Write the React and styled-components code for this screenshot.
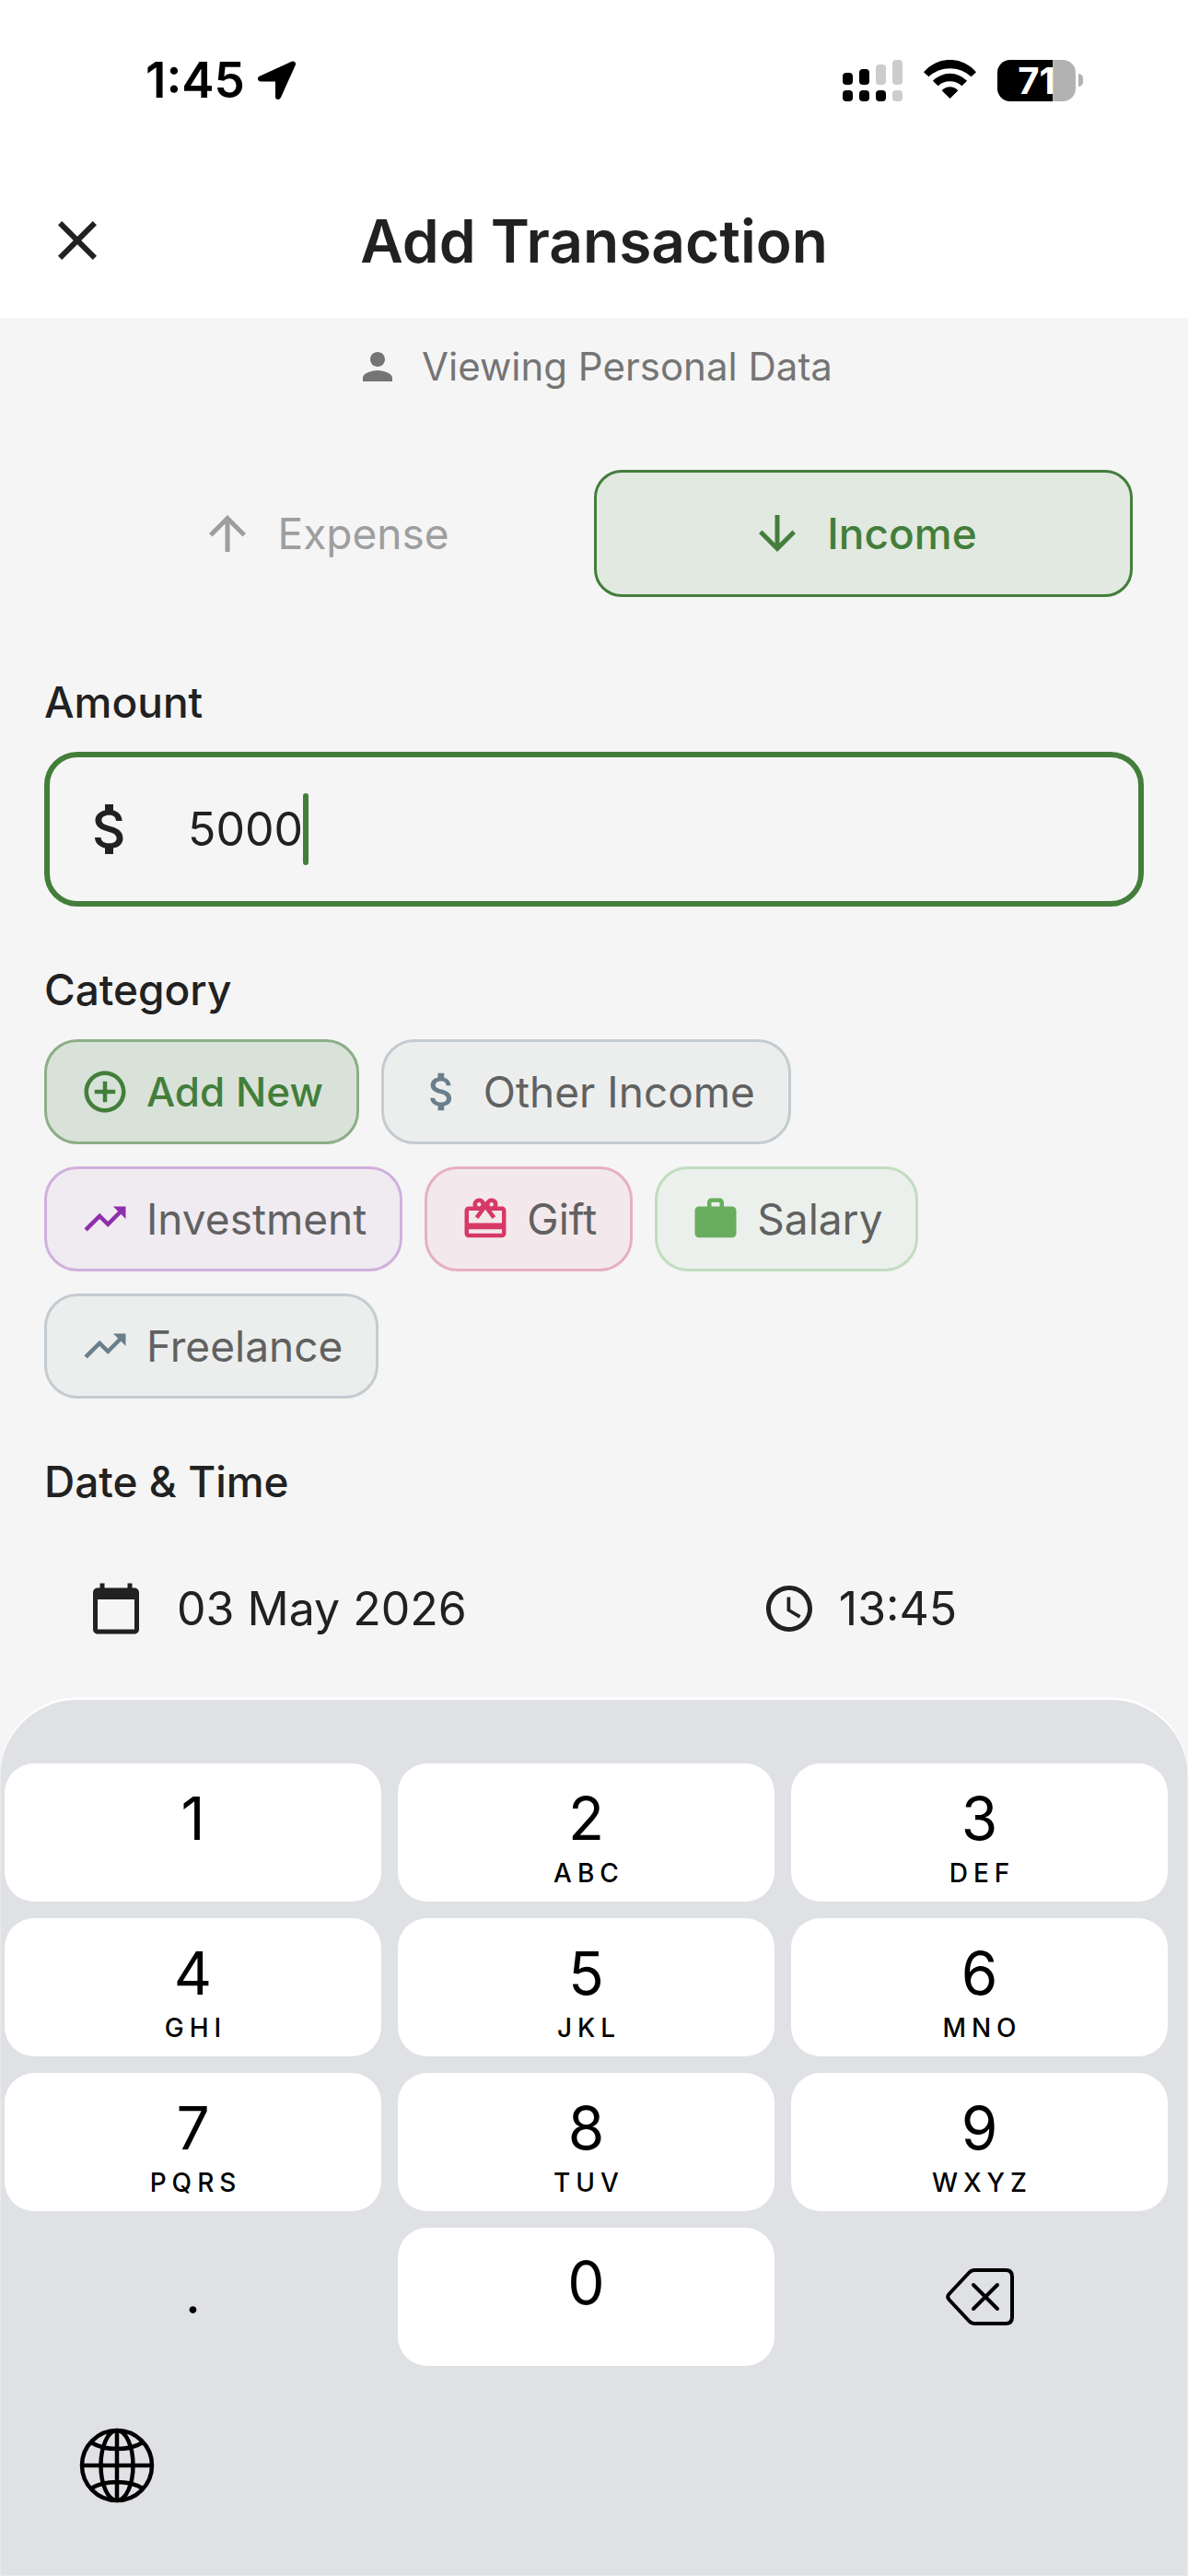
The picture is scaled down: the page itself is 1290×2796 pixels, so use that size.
import React, { useState } from "react"
import styled, { createGlobalStyle } from "styled-components"
import {
  MdAccessTime,
  MdAddCircleOutline,
  MdArrowDownward,
  MdArrowUpward,
  MdAttachMoney,
  MdCalendarToday,
  MdCardGiftcard,
  MdClose,
  MdPerson,
  MdTrendingUp,
  MdWork,
} from "react-icons/md"

const colors = {
  black: "#000000",
  white: "#ffffff",
  page: "#f5f5f5",
  text: "#212121",
  chipText: "#616161",
  muted: "#757575",
  disabled: "#9e9e9e",
  green: "#437e3a",
  greenTint: "#e1e9e1",
  keyboard: "#dfe1e5",
}

const fonts = {
  title: "64px",
  body: "50px",
  option: "46px",
  strong: "44px",
  small: "42px",
}

const GlobalStyle = createGlobalStyle`
  *, *::before, *::after {
    box-sizing: border-box;
  }

  body {
    margin: 0;
    background: ${colors.page};
    color: ${colors.text};
    font-family: Inter, "Liberation Sans", sans-serif;
  }

  button, input {
    margin: 0;
    padding: 0;
    border: 0;
    background: none;
    color: inherit;
    font: inherit;
  }

  svg {
    display: block;
    flex-shrink: 0;
  }
`

const Screen = styled.div`
  display: flex;
  flex-direction: column;
  min-height: 100vh;
`

const StatusBar = styled.div`
  display: flex;
  align-items: center;
  justify-content: space-between;
  height: 177px;
  padding: 0 114px 3px 158px;
  background: ${colors.white};
  color: ${colors.black};
`

const StatusGroup = styled.div`
  display: flex;
  align-items: center;
  gap: ${props => props.$gap};
`

const Clock = styled.span`
  font-size: 53px;
  font-weight: 600;
`

const Battery = styled.div`
  display: flex;
  align-items: center;
  gap: 3px;
`

const BatteryBody = styled.div`
  display: flex;
  align-items: center;
  justify-content: center;
  width: 85px;
  height: 45px;
  border-radius: 14px;
  background: linear-gradient(to right, ${colors.black} 71%, #b2b2b2 71%);
  color: ${colors.white};
  font-size: 40px;
  font-weight: 700;
  line-height: 45px;
`

const BatteryTip = styled.div`
  width: 5px;
  height: 14px;
  border-radius: 0 5px 5px 0;
  background: #b2b2b2;
`

const Header = styled.header`
  display: grid;
  grid-template-columns: 72px 1fr 72px;
  align-items: center;
  height: 168px;
  padding: 0 48px;
  background: ${colors.white};
`

const Title = styled.h1`
  margin: 0;
  font-size: ${fonts.title};
  font-weight: 600;
  text-align: center;
`

const Notice = styled.p`
  display: flex;
  align-items: center;
  justify-content: center;
  gap: 24px;
  height: 105px;
  margin: 0;
  color: ${colors.muted};
  font-size: ${fonts.small};
`

const TypeToggle = styled.div`
  display: flex;
  padding: 60px 60px 24px;
`

const TypeButton = styled.button`
  display: flex;
  flex: 1;
  align-items: center;
  justify-content: center;
  gap: 24px;
  height: 138px;
  border: 3px solid ${props => (props.$active ? colors.green : "transparent")};
  border-radius: 30px;
  background: ${props => (props.$active ? colors.greenTint : "transparent")};
  color: ${props => (props.$active ? colors.green : colors.disabled)};
  font-size: ${fonts.option};
  font-weight: ${props => (props.$active ? 500 : 400)};
`

const Section = styled.section`
  padding: 60px 48px 0;
`

const sectionLabel = `
  display: block;
  margin: 0 0 24px;
  font-size: ${fonts.option};
  font-weight: 500;
  line-height: 60px;
`

const FieldLabel = styled.label`
  ${sectionLabel}
`

const SectionHeader = styled.h2`
  ${sectionLabel}
`

const AmountBox = styled.div`
  display: flex;
  align-items: center;
  height: 168px;
  padding: 0 30px;
  border: 6px solid ${colors.green};
  border-radius: 36px;
`

const AmountInput = styled.input`
  field-sizing: content;
  margin-left: 48px;
  outline: none;
  caret-color: transparent;
  font-size: ${fonts.body};
`

const Caret = styled.span`
  width: 6px;
  height: 78px;
  border-radius: 3px;
  background: ${colors.green};
`

const Chips = styled.div`
  display: flex;
  flex-wrap: wrap;
  gap: 24px;
`

const Chip = styled.button`
  display: flex;
  align-items: center;
  gap: 18px;
  height: 114px;
  padding: 0 36px;
  border: 3px solid ${props => props.$border};
  border-radius: 36px;
  background: ${props => props.$tint};
  color: ${props => (props.$strong ? colors.green : colors.chipText)};
  font-size: ${props => (props.$strong ? fonts.strong : fonts.option)};
  font-weight: ${props => (props.$strong ? 500 : 400)};

  svg {
    color: ${props => props.$icon};
  }
`

const DateRow = styled.div`
  display: grid;
  grid-template-columns: 3fr 2fr;
  gap: 36px;
  padding-bottom: 12px;
`

const DateButton = styled.button`
  display: flex;
  align-items: center;
  gap: ${props => props.$gap};
  height: 168px;
  padding: 0 48px;
  font-size: ${fonts.body};
`

const Keyboard = styled.div`
  flex: 1;
  padding: 72px 22px 66px 5px;
  border-radius: 84px 84px 0 0;
  background: ${colors.keyboard};
  box-shadow: inset 0 3px 0 ${colors.white}, inset 0 0 0 1px #e8eaed;
  color: ${colors.black};
`

const Keys = styled.div`
  display: grid;
  grid-template-columns: repeat(3, 1fr);
  gap: 18px;
`

const Key = styled.button`
  display: flex;
  flex-direction: column;
  align-items: center;
  height: 150px;
  padding-top: 18px;
  border-radius: 32px;
  background: ${colors.white};
`

const PlainKey = styled.button`
  display: flex;
  align-items: center;
  justify-content: center;
  height: 150px;
  font-size: ${fonts.body};
  font-weight: 600;
`

const Digit = styled.span`
  font-size: 64px;
  line-height: 84px;
`

const Letters = styled.span`
  padding-left: 6px;
  font-size: 28px;
  font-weight: 500;
  letter-spacing: 6px;
  line-height: 34px;
`

const GlobeButton = styled.button`
  display: block;
  margin: 66px 0 0 80px;
`

const LocationArrow = () => (
  <svg width="42" height="42" viewBox="0 0 42 42">
    <path
      d="M38 3.5 3 19.5H22V39Z"
      fill="currentColor"
      stroke="currentColor"
      strokeWidth="6"
      strokeLinejoin="round"
    />
  </svg>
)

const barTops = [14, 10, 5, 0]

const Signal = () => (
  <svg width="65" height="45" viewBox="0 0 65 45">
    {barTops.map((top, i) => (
      <g key={top}>
        <rect
          x={i * 18}
          y={top}
          width="11"
          height={27 - top}
          rx="4"
          fill={i < 2 ? colors.black : "#cccccc"}
        />
        <rect
          x={i * 18}
          y="33"
          width="11"
          height="12"
          rx="4"
          fill={i < 3 ? colors.black : "#cccccc"}
        />
      </g>
    ))}
  </svg>
)

const Wifi = () => (
  <svg width="57" height="44" viewBox="0 0 57 44">
    <path d="M0 13.3A37 37 0 0 1 57 13.3L51.6 18.3A34 34 0 0 0 5.4 18.3Z" />
    <path d="M9.9 22.7A26 26 0 0 1 47.1 22.7L41.4 28.3A19 19 0 0 0 15.6 28.3Z" />
    <path d="M19.7 33.2A12 12 0 0 1 37.3 33.2L28.5 42Z" />
  </svg>
)

const DeleteIcon = () => (
  <svg
    width="74"
    height="62"
    viewBox="0 0 74 62"
    fill="none"
    stroke="currentColor"
    strokeWidth="4"
    strokeLinecap="round"
    strokeLinejoin="round"
  >
    <path d="M31 2H65Q72 2 72 9V53Q72 60 65 60H31Q28 60 25.500 57.500L3.500 34Q1 31 3.500 28L25.500 4.500Q28 2 31 2Z" />
    <path d="M30 18 56 44M56 18 30 44" />
  </svg>
)

const GlobeIcon = () => (
  <svg
    width="84"
    height="84"
    viewBox="0 0 84 84"
    fill="none"
    stroke="currentColor"
    strokeWidth="4.500"
  >
    <circle cx="42" cy="42" r="38" />
    <ellipse cx="42" cy="42" rx="17.500" ry="38" />
    <path d="M42 4V80M4 42H80M14 17Q25 24 42 24T70 17M14 67Q25 60 42 60T70 67" />
  </svg>
)

const grey = { $tint: "#eceeed", $border: "#c4cbd1", $icon: "#6a7f8c" }

const categories = [
  { name: "Other Income", Icon: MdAttachMoney, palette: grey },
  {
    name: "Investment",
    Icon: MdTrendingUp,
    palette: { $tint: "#f0ebf1", $border: "#d0b0de", $icon: "#8e2fab" },
  },
  {
    name: "Gift",
    Icon: MdCardGiftcard,
    palette: { $tint: "#f3e9ec", $border: "#e6b0c0", $icon: "#d73966" },
  },
  {
    name: "Salary",
    Icon: MdWork,
    palette: { $tint: "#ebf0ec", $border: "#c1ddbf", $icon: "#69ad5f" },
  },
  { name: "Freelance", Icon: MdTrendingUp, palette: grey },
]

const keys = [
  ["1", ""],
  ["2", "ABC"],
  ["3", "DEF"],
  ["4", "GHI"],
  ["5", "JKL"],
  ["6", "MNO"],
  ["7", "PQRS"],
  ["8", "TUV"],
  ["9", "WXYZ"],
]

const App = () => {
  const [type, setType] = useState("income")
  const [amount, setAmount] = useState("5000")

  const press = character => setAmount(amount + character)

  return (
    <Screen>
      <GlobalStyle />
      <StatusBar>
        <StatusGroup $gap="14px">
          <Clock>1:45</Clock>
          <LocationArrow />
        </StatusGroup>
        <StatusGroup $gap="23px">
          <Signal />
          <Wifi />
          <Battery>
            <BatteryBody>71</BatteryBody>
            <BatteryTip />
          </Battery>
        </StatusGroup>
      </StatusBar>

      <Header>
        <button type="button" aria-label="Close">
          <MdClose size={72} />
        </button>
        <Title>Add Transaction</Title>
      </Header>

      <main>
        <Notice>
          <MdPerson size={48} />
          Viewing Personal Data
        </Notice>

        <TypeToggle>
          <TypeButton
            type="button"
            aria-pressed={type === "expense"}
            $active={type === "expense"}
            onClick={() => setType("expense")}
          >
            <MdArrowUpward size={60} />
            Expense
          </TypeButton>
          <TypeButton
            type="button"
            aria-pressed={type === "income"}
            $active={type === "income"}
            onClick={() => setType("income")}
          >
            <MdArrowDownward size={60} />
            Income
          </TypeButton>
        </TypeToggle>

        <Section>
          <FieldLabel htmlFor="amount">Amount</FieldLabel>
          <AmountBox>
            <MdAttachMoney size={72} />
            <AmountInput
              id="amount"
              inputMode="decimal"
              value={amount}
              onChange={event => setAmount(event.target.value)}
            />
            <Caret />
          </AmountBox>
        </Section>

        <Section>
          <SectionHeader>Category</SectionHeader>
          <Chips>
            <Chip
              type="button"
              $strong
              $tint="#d9e2d9"
              $border="#8bae87"
              $icon={colors.green}
            >
              <MdAddCircleOutline size={54} />
              Add New
            </Chip>
            {categories.map(({ name, Icon, palette }) => (
              <Chip key={name} type="button" {...palette}>
                <Icon size={54} />
                {name}
              </Chip>
            ))}
          </Chips>
        </Section>

        <Section>
          <SectionHeader>Date &amp; Time</SectionHeader>
          <DateRow>
            <DateButton type="button" $gap="36px">
              <MdCalendarToday size={60} />
              03 May 2026
            </DateButton>
            <DateButton type="button" $gap="24px">
              <MdAccessTime size={60} />
              13:45
            </DateButton>
          </DateRow>
        </Section>
      </main>

      <Keyboard>
        <Keys>
          {keys.map(([digit, letters]) => (
            <Key key={digit} type="button" onClick={() => press(digit)}>
              <Digit>{digit}</Digit>
              {letters && <Letters>{letters}</Letters>}
            </Key>
          ))}
          <PlainKey type="button" onClick={() => press(".")}>
            .
          </PlainKey>
          <Key type="button" onClick={() => press("0")}>
            <Digit>0</Digit>
          </Key>
          <PlainKey
            type="button"
            aria-label="Delete"
            onClick={() => setAmount(amount.slice(0, -1))}
          >
            <DeleteIcon />
          </PlainKey>
        </Keys>
        <GlobeButton type="button" aria-label="Next keyboard">
          <GlobeIcon />
        </GlobeButton>
      </Keyboard>
    </Screen>
  )
}

export default App
